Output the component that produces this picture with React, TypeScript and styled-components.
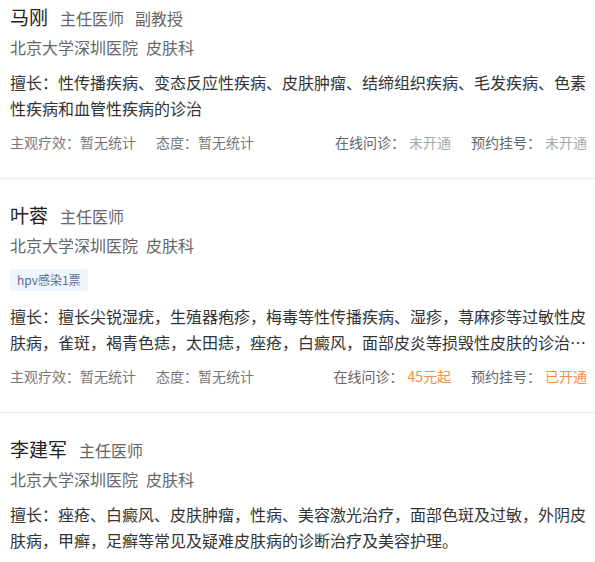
import React from "react";
import styled, { createGlobalStyle } from "styled-components";

const GlobalStyle = createGlobalStyle`
  body {
    margin: 0;
    background: #fff;
    font-family: "Noto Sans CJK SC", "Noto Sans", sans-serif;
  }
`;

type Doctor = {
  name: string;
  titles: string[];
  hospital: string;
  dept: string;
  tag?: string;
  expertise: string;
  online: string;
  booking: string;
  opened: boolean;
};

const doctors: Doctor[] = [
  {
    name: "马刚",
    titles: ["主任医师", "副教授"],
    hospital: "北京大学深圳医院",
    dept: "皮肤科",
    expertise:
      "擅长：性传播疾病、变态反应性疾病、皮肤肿瘤、结缔组织疾病、毛发疾病、色素性疾病和血管性疾病的诊治",
    online: "未开通",
    booking: "未开通",
    opened: false,
  },
  {
    name: "叶蓉",
    titles: ["主任医师"],
    hospital: "北京大学深圳医院",
    dept: "皮肤科",
    tag: "hpv感染1票",
    // already shortened to two lines
    expertise:
      "擅长：擅长尖锐湿疣，生殖器疱疹，梅毒等性传播疾病、湿疹，荨麻疹等过敏性皮肤病，雀斑，褐青色痣，太田痣，痤疮，白癜风，面部皮炎等损毁性皮肤的诊治…",
    online: "45元起",
    booking: "已开通",
    opened: true,
  },
  {
    name: "李建军",
    titles: ["主任医师"],
    hospital: "北京大学深圳医院",
    dept: "皮肤科",
    expertise:
      "擅长：痤疮、白癜风、皮肤肿瘤，性病、美容激光治疗，面部色斑及过敏，外阴皮肤病，甲癣，足癣等常见及疑难皮肤病的诊断治疗及美容护理。",
    online: "",
    booking: "",
    opened: false,
  },
];

const List = styled.div`
  display: flex;
  flex-direction: column;
`;

const Card = styled.div<{ first?: boolean; last?: boolean }>`
  padding: ${({ first }) => (first ? "3px" : "22px")} 8px
    ${({ last }) => (last ? "0" : "26px")} 10px;
  border-bottom: ${({ last }) => (last ? "none" : "1px solid #ebebeb")};
`;

const NameRow = styled.div`
  display: flex;
  align-items: baseline;
  height: 28px;
  line-height: 28px;
`;

const Name = styled.span`
  font-size: 19px;
  color: #222;
  margin-right: 12px;
`;

const Title = styled.span`
  font-size: 16px;
  color: #666;
  margin-right: 11px;
`;

const Hospital = styled.div`
  margin-top: 4px;
  font-size: 16px;
  line-height: 24px;
  color: #666;

  span + span {
    margin-left: 8px;
  }
`;

const Tag = styled.div`
  display: inline-block;
  margin-top: 12px;
  height: 22px;
  line-height: 22px;
  padding: 0 7px;
  border-radius: 3px;
  background: #eef4fc;
  color: #5c6c8e;
  font-size: 12px;
`;

const Expertise = styled.div<{ hasTag?: boolean }>`
  margin-top: ${({ hasTag }) => (hasTag ? "12px" : "10px")};
  font-size: 16px;
  line-height: 26px;
  color: #333;
`;

const Stats = styled.div`
  margin-top: 11px;
  display: flex;
  justify-content: space-between;
  font-size: 14px;
  line-height: 20px;
  color: #777;
`;

const StatGroup = styled.div`
  display: flex;
  gap: 20px;
`;

const Stat = styled.span``;

const Value = styled.span<{ active?: boolean }>`
  margin-left: 4px;
  color: ${({ active }) => (active ? "#fb8c3c" : "#aaa")};
`;

const Label = styled.span`
  color: #666;
`;

export default function App() {
  return (
    <>
      <GlobalStyle />
      <List>
        {doctors.map((d, i) => {
          const last = i === doctors.length - 1;
          return (
            <Card key={d.name} first={i === 0} last={last}>
              <NameRow>
                <Name>{d.name}</Name>
                {d.titles.map((t) => (
                  <Title key={t}>{t}</Title>
                ))}
              </NameRow>
              <Hospital>
                <span>{d.hospital}</span>
                <span>{d.dept}</span>
              </Hospital>
              {d.tag && <Tag>{d.tag}</Tag>}
              <Expertise hasTag={!!d.tag}>{d.expertise}</Expertise>
              {!last && (
                <Stats>
                  <StatGroup>
                    <Stat>主观疗效：暂无统计</Stat>
                    <Stat>态度：暂无统计</Stat>
                  </StatGroup>
                  <StatGroup>
                    <Stat>
                      <Label>在线问诊：</Label>
                      <Value active={d.opened}>{d.online}</Value>
                    </Stat>
                    <Stat>
                      <Label>预约挂号：</Label>
                      <Value active={d.opened}>{d.booking}</Value>
                    </Stat>
                  </StatGroup>
                </Stats>
              )}
            </Card>
          );
        })}
      </List>
    </>
  );
}
